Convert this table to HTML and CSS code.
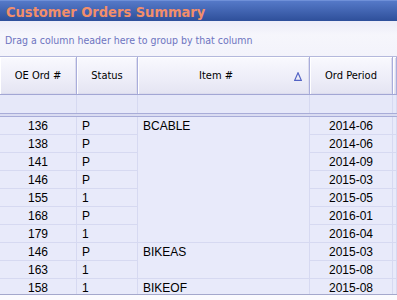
FILE: index.html
```
<!DOCTYPE html>
<html>
<head>
<meta charset="utf-8">
<link rel="stylesheet" href="styles.css">
</head>
<body>
<div class="panel">
  <div class="titlebar">Customer Orders Summary</div>
  <div class="grouppanel">Drag a column header here to group by that column</div>
  <div class="cols hdr">
    <div class="hcell">OE Ord #</div>
    <div class="hcell">Status</div>
    <div class="hcell sorted"><span class="htext">Item #</span><svg class="sort" width="8" height="9" viewBox="0 0 8 9"><path d="M4 0.8 L7.3 8.3 L0.7 8.3 Z" fill="none" stroke="#5363c4" stroke-width="1.2"/></svg></div>
    <div class="hcell">Ord Period</div>
    <div class="hcell"></div>
  </div>
  <div class="cols filter">
    <div class="fcell"></div><div class="fcell"></div><div class="fcell"></div><div class="fcell"></div><div class="fcell"></div>
  </div>
  <div class="sep"></div>
  <div class="cols body">
    <div class="cell num">136</div><div class="cell left">P</div><div class="cell left item s7">BCABLE</div><div class="cell num">2014-06</div><div class="cell"></div>
    <div class="cell num">138</div><div class="cell left">P</div><div class="cell num">2014-06</div><div class="cell"></div>
    <div class="cell num">141</div><div class="cell left">P</div><div class="cell num">2014-09</div><div class="cell"></div>
    <div class="cell num">146</div><div class="cell left">P</div><div class="cell num">2015-03</div><div class="cell"></div>
    <div class="cell num">155</div><div class="cell left">1</div><div class="cell num">2015-05</div><div class="cell"></div>
    <div class="cell num">168</div><div class="cell left">P</div><div class="cell num">2016-01</div><div class="cell"></div>
    <div class="cell num">179</div><div class="cell left">1</div><div class="cell num">2016-04</div><div class="cell"></div>
    <div class="cell num">146</div><div class="cell left">P</div><div class="cell left item s2">BIKEAS</div><div class="cell num">2015-03</div><div class="cell"></div>
    <div class="cell num">163</div><div class="cell left">1</div><div class="cell num">2015-08</div><div class="cell"></div>
    <div class="cell num">158</div><div class="cell left">1</div><div class="cell left item">BIKEOF</div><div class="cell num">2015-08</div><div class="cell"></div>
  </div>
  <div class="foot"></div>
</div>
</body>
</html>
```
FILE: styles.css
```
* { box-sizing: border-box; margin: 0; padding: 0; }
body { margin: 0; width: 397px; height: 300px; overflow: hidden; background: #fbfbfe; }
.panel { width: 397px; height: 300px; display: flex; flex-direction: column; overflow: hidden; }
.titlebar {
  height: 21px; flex: none; overflow: hidden;
  background: linear-gradient(#5579c8, #2e4f9a);
  border-top: 1px solid #6f90d8;
  color: #f28e6a;
  font: bold 14.5px "DejaVu Sans Condensed", "DejaVu Sans", sans-serif;
  line-height: 22px; padding-left: 6px;
}
.grouppanel {
  height: 35px; flex: none;
  background: linear-gradient(#ececf8, #f6f6fc 40%, #f3f3fb);
  color: #6d74c0;
  font: 10.5px "DejaVu Sans Condensed", "DejaVu Sans", sans-serif;
  padding: 3px 0 0 5px; display: flex; align-items: center;
}
.cols { display: grid; grid-template-columns: 77px 61px 172px 83px 1fr; flex: none; }
.hdr { height: 39px; border-top: 1px solid #b4b8dc; border-bottom: 1px solid #a2a6d4; }
.hcell {
  border-right: 1px solid #a9addb;
  background: linear-gradient(#f9f9fe, #ededf8 60%, #e4e4f2);
  box-shadow: inset 1px 1px 0 #ffffff, inset -1px -1px 0 #dcdcee;
  display: flex; align-items: center; justify-content: center;
  font: 11px "DejaVu Sans Condensed", "DejaVu Sans", sans-serif; color: #000;
}
.hcell.sorted { justify-content: flex-start; }
.htext { flex: 1; text-align: center; }
.sort { margin-right: 7px; margin-top: 1px; }
.filter { height: 18px; background: #e6e8f9; }
.fcell { border-right: 1px solid #d6d9f1; }
.sep { height: 4px; flex: none; border-top: 1px solid #a8acd8; border-bottom: 1px solid #a8acd8; background: #dadcf1; }
.body { height: 177px; overflow: hidden; grid-auto-rows: 18px; background: #e8eafa; align-content: start; }
.cell {
  border-right: 1px solid #d6d9f1; border-bottom: 1px solid #d6d9f1;
  font: 12px "Liberation Sans", Arial, sans-serif; color: #000;
  line-height: 18px; white-space: nowrap; overflow: hidden;
}
.num { text-align: center; }
.left { padding-left: 5px; }
.item { padding-left: 5px; }
.s7 { grid-row: span 7; }
.s2 { grid-row: span 2; }
.foot { flex: 1; border-top: 1px solid #a4a8cc; background: #fbfbfe; }
```
